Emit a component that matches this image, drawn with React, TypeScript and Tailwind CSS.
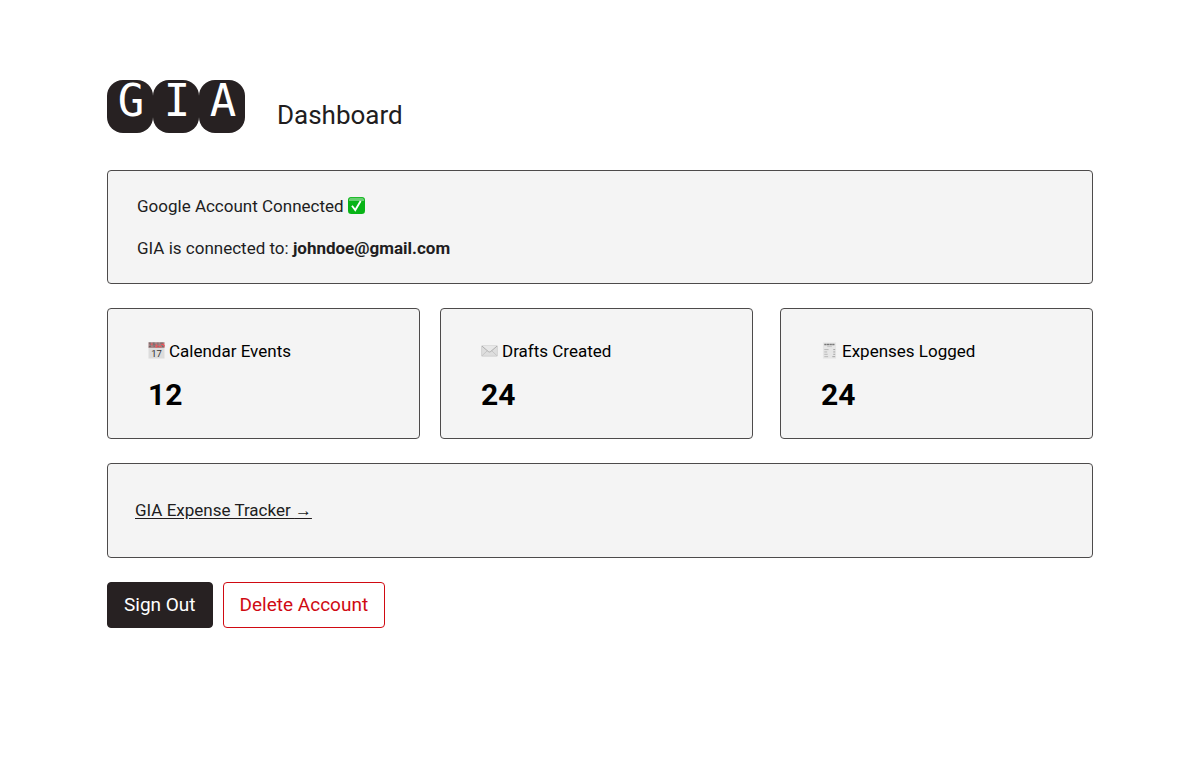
import type { ReactNode } from "react";
import { clsx } from "clsx";

interface PanelProps {
  className?: string;
  children: ReactNode;
}

interface StatCardProps {
  icon: ReactNode;
  label: string;
  value: number;
}

const Panel = ({ className, children }: PanelProps) => (
  <section className={clsx("rounded-sm border border-[#4d4b4b] bg-[#f4f4f4]", className)}>
    {children}
  </section>
);

const Logo = () => (
  <div className="flex" role="img" aria-label="GIA">
    {["G", "I", "A"].map((letter) => (
      <span
        key={letter}
        className="flex h-[53px] w-[46px] justify-center rounded-2xl bg-[#272122] pt-px pl-[2px] font-['DejaVu_Sans_Mono',monospace] text-[44px] leading-10 text-white"
      >
        {letter}
      </span>
    ))}
  </div>
);

const CheckIcon = () => (
  <svg width="17" height="18" viewBox="0 0 18 19" aria-hidden="true">
    <rect width="18" height="18" rx="3.5" fill="#08b416" />
    <path d="M1 4.3V3.5A2.8 2.8 0 0 1 3.8.7h10.4A2.8 2.8 0 0 1 17 3.5v.8z" fill="#67cf70" />
    <path d="M4.2 9.2 7.7 13.8 13.4 4.2" fill="none" stroke="#fff" strokeWidth="1.9" />
  </svg>
);

const CalendarIcon = () => (
  <svg width="17" height="18" viewBox="0 0 18 19" aria-hidden="true">
    <path d="M.5 5h17v12.5H.5z" fill="#dcdcdc" />
    <path d="M.5.2h17v6H.5z" fill="#a58082" />
    <path
      d="M1 1.2h2m2 0h2m3 0h1m2 0h3M2 3h1m2 0h3m2 0h1m3 0h2M1 4.8h2m3 0h1m3 0h3m2 0h2"
      stroke="#666464"
    />
    <path d="M3 2.2h2m3 1.2h2m1 1.4h3m0-2.4h3m-9 2.6h2m6-1h2" stroke="#f0555c" strokeWidth="1.4" />
    <text
      x="9"
      y="15.4"
      textAnchor="middle"
      fill="#333"
      className="font-['Roboto',sans-serif] text-[10px]"
    >
      17
    </text>
  </svg>
);

const EnvelopeIcon = () => (
  <svg width="17" height="18" viewBox="0 0 18 19" aria-hidden="true">
    <rect x=".6" y="4" width="16.8" height="11" rx=".6" fill="#dedede" stroke="#cacaca" strokeWidth=".7" />
    <path d="m1 14.6 5.9-5.6m10.1 5.6-5.9-5.6" fill="none" stroke="#b9b9b9" strokeWidth=".7" />
    <path d="m1 4.3 6.8 5.8q1.2.9 2.4 0l6.8-5.8" fill="#e8e8e8" stroke="#a4a4a4" strokeWidth=".9" />
  </svg>
);

const ReceiptIcon = () => (
  <svg width="17" height="18" viewBox="0 0 18 19" aria-hidden="true">
    <path d="M2 .4h14v17.2H2z" fill="#e6e6e6" />
    <path d="M3.5 2.5h11" stroke="#777" strokeWidth="1.6" strokeDasharray="2.4 .4" />
    <path d="M6.5 4.8h5" stroke="#bbb" strokeWidth=".7" />
    <path d="M3.5 8h4.5m-4.5 2.5h3m-3 2.5h3.5m-3.5 2.5h4" stroke="#b0b0b0" strokeWidth=".9" />
    <path d="M13 8h2m-2 2.5h2m-2 2.5h2m-3 2.5h3" stroke="#999" strokeWidth=".9" />
  </svg>
);

const StatCard = ({ icon, label, value }: StatCardProps) => (
  <Panel className="px-10 pt-[30px] pb-[25px] text-black">
    <h2 className="flex items-center gap-1 text-[17px] leading-6">
      {icon}
      {label}
    </h2>
    <p className="mt-[14px] text-[30px] leading-9 font-bold">{value}</p>
  </Panel>
);

const App = () => {
  return (
    <main className="flex flex-col gap-6 px-[107px] pt-20 pb-10 font-['Roboto',sans-serif] text-[17px] leading-6 text-[#211d1e]">
      <header className="mb-[13px] flex items-end gap-8">
        <Logo />
        <h1 className="text-[26px] leading-9">Dashboard</h1>
      </header>

      <Panel className="flex flex-col gap-[18px] px-[29px] py-[23px]">
        <p className="flex items-center gap-1">
          Google Account Connected
          <CheckIcon />
        </p>
        <p>
          GIA is connected to: <strong className="font-bold">johndoe@gmail.com</strong>
        </p>
      </Panel>

      <div className="grid grid-cols-[646fr_313fr] gap-[27px]">
        <div className="grid grid-cols-2 gap-5">
          <StatCard icon={<CalendarIcon />} label="Calendar Events" value={12} />
          <StatCard icon={<EnvelopeIcon />} label="Drafts Created" value={24} />
        </div>
        <StatCard icon={<ReceiptIcon />} label="Expenses Logged" value={24} />
      </div>

      <Panel className="px-[27px] py-[34px]">
        <a href="#expenses" className="underline underline-offset-2">
          GIA Expense Tracker <span className="font-['Liberation_Sans',sans-serif]">→</span>
        </a>
      </Panel>

      <div className="flex gap-[10px] text-[19px]">
        <button type="button" className="rounded-sm border border-[#272122] bg-[#272122] px-4 py-[10px] text-white">
          Sign Out
        </button>
        <button type="button" className="rounded-sm border border-[#d00a12] bg-white px-4 py-[10px] text-[#d00a12]">
          Delete Account
        </button>
      </div>
    </main>
  );
};

export default App;
